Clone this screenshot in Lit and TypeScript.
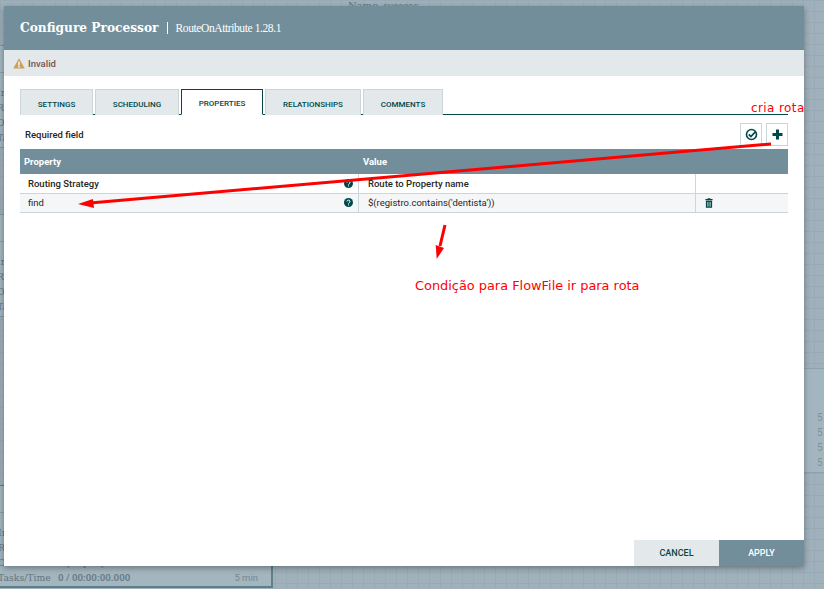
import { LitElement, html, css, svg } from 'lit'
import { customElement } from 'lit/decorators.js'

const TABS = ['SETTINGS', 'SCHEDULING', 'PROPERTIES', 'RELATIONSHIPS', 'COMMENTS']
const TAB_WIDTHS = [73, 84, 82, 96, 80]
const STATS = [
	['In', ''],
	['Read/Write', ''],
	['Out', '0 (0 bytes)'],
	['Tasks/Time', '0 / 00:00:00.000'],
]

@customElement('app-root')
class AppRoot extends LitElement {
	static styles = css`
		:host {
			display: block;
			position: relative;
			width: 824px;
			height: 589px;
			overflow: hidden;
			font-family: Roboto, sans-serif;
			background-color: #a0b1bc;
			background-image: linear-gradient(#98aab5 1px, transparent 1px),
				linear-gradient(90deg, #98aab5 1px, transparent 1px);
			background-size: 11px 11px;
		}

		/* processor cards behind the dialog */
		.card {
			position: absolute;
			left: -10px;
			width: 283px;
			height: 103px;
			box-sizing: border-box;
			background: #a3b5bf;
			border: 1px solid #5f7f89;
			border-width: 1px 2px 2px 1px;
		}
		.card.behind {
			width: 14px;
			overflow: hidden;
			border-width: 1px 0;
			border-color: #84979f;
		}
		.card-head {
			height: 27px;
			margin-bottom: 12px;
			border-bottom: 1px solid #8a9da7;
			box-sizing: border-box;
		}
		.stat {
			height: 15px;
			display: flex;
			align-items: center;
			padding-left: 7px;
		}
		.stat-label {
			font-family: 'DejaVu Serif', serif;
			font-size: 9.3px;
			color: #62757e;
			width: 60px;
			flex: none;
		}
		.stat-value {
			font-weight: 700;
			font-size: 9.7px;
			color: #6b7f89;
			flex: 1;
		}
		.stat-age {
			margin-right: 13px;
			color: #74888f;
			font-size: 9.5px;
		}
		.top-name {
			position: absolute;
			left: 348px;
			top: 0;
			display: flex;
			align-items: baseline;
			gap: 5px;
			font-family: 'DejaVu Serif', serif;
			font-size: 10px;
			color: #66777f;
		}
		.top-name b {
			font-family: Roboto, sans-serif;
			font-size: 9.5px;
			color: #74878f;
		}
		.side {
			position: absolute;
			left: 804px;
			top: 368px;
			width: 20px;
			height: 105px;
			box-sizing: border-box;
			padding: 41px 0 0 13px;
			background: #a3b6c0;
			border-top: 1px solid #8fa2ac;
			border-bottom: 1px solid #8fa2ac;
			font-size: 10px;
			color: #7e929b;
		}
		.side div {
			height: 15px;
			line-height: 15px;
		}

		.dialog {
			position: absolute;
			left: 4px;
			top: 6px;
			width: 800px;
			height: 560px;
			background: #fff;
			display: flex;
			flex-direction: column;
			box-shadow: 0 2px 6px rgba(0, 0, 0, 0.35);
		}
		.head {
			height: 44px;
			flex: none;
			background: #728e9b;
			color: #fff;
			display: flex;
			align-items: center;
			padding-left: 16px;
			box-sizing: border-box;
		}
		.title {
			font-family: 'DejaVu Serif', serif;
			font-weight: 700;
			font-size: 12.2px;
			padding-right: 8px;
			border-right: 1px solid #fff;
			line-height: 12px;
		}
		.type {
			font-family: 'Liberation Serif', serif;
			font-size: 11.5px;
			letter-spacing: -0.4px;
			padding-left: 8px;
			line-height: 14px;
		}
		.status {
			height: 26px;
			flex: none;
			background: #e3e8eb;
			display: flex;
			align-items: center;
			gap: 3px;
			padding-left: 9px;
			font-size: 9.5px;
			font-weight: 500;
			color: #775351;
		}
		.body {
			flex: 1;
			padding: 13px 16px 0;
		}
		.tabs {
			display: flex;
			height: 26px;
			gap: 2px;
			border-bottom: 1px solid #004849;
			box-sizing: border-box;
		}
		.tab {
			height: 26px;
			box-sizing: border-box;
			background: #e3e8eb;
			border: 1px solid #cad6dc;
			border-bottom: none;
			color: #004849;
			font-size: 8px;
			font-weight: 500;
			display: flex;
			align-items: center;
			justify-content: center;
			padding-top: 3px;
		}
		.tab.active {
			background: #fff;
			border: 1px solid #004849;
			border-bottom: 1px solid #fff;
		}
		.tools {
			display: flex;
			align-items: center;
			height: 34px;
			padding-left: 5px;
			font-size: 9.5px;
			font-weight: 500;
			color: #262626;
			gap: 4px;
		}
		.tools span {
			flex: 1;
			margin-top: 4px;
		}
		.tool {
			width: 22px;
			height: 23px;
			box-sizing: border-box;
			border: 1px solid #cad6dc;
			display: flex;
			align-items: center;
			justify-content: center;
			margin-top: 4px;
		}
		.table {
			display: grid;
			grid-template-columns: 339px 337px 92px;
			font-size: 9.5px;
			color: #262626;
		}
		.th {
			height: 25px;
			background: #728e9b;
			color: #fff;
			font-weight: 700;
			display: flex;
			align-items: center;
			padding-left: 4px;
		}
		.td {
			height: 19.5px;
			box-sizing: border-box;
			border-bottom: 1px solid #cad6dc;
			border-right: 1px solid #cad6dc;
			display: flex;
			align-items: center;
			justify-content: space-between;
			padding: 0 5px 0 8px;
		}
		.td.end {
			border-right: none;
			padding-left: 9px;
		}
		.td.name {
			font-weight: 500;
		}
		.td.alt {
			background: #f4f6f7;
		}
		.td.val {
			padding-left: 9px;
		}
		.foot {
			display: flex;
			justify-content: flex-end;
			flex: none;
		}
		.btn {
			width: 85px;
			height: 26px;
			display: flex;
			align-items: center;
			justify-content: center;
			font-size: 9px;
			font-weight: 500;
		}
		.cancel {
			background: #e3e8eb;
			color: #004849;
		}
		.apply {
			background: #728e9b;
			color: #fff;
		}

		/* hand drawn notes on top of the screenshot */
		.marks {
			position: absolute;
			left: 0;
			top: 0;
		}
		.note {
			position: absolute;
			font-family: 'DejaVu Sans', sans-serif;
			color: #f00;
			white-space: nowrap;
		}
		.note-route {
			left: 751px;
			top: 101px;
			font-size: 12px;
			letter-spacing: 0.4px;
		}
		.note-cond {
			left: 415px;
			top: 278px;
			font-size: 12.9px;
		}
	`

	private help() {
		return html`<svg width="9" height="9" viewBox="0 0 9 9">
			<circle cx="4.5" cy="4.5" r="4.5" fill="#004849" />
			<path d="M3 3.5a1.5 1.4 0 1 1 2.2 1.2c-.5.3-.7.5-.7 1" fill="none" stroke="#fff" stroke-width="1" />
			<rect x="4" y="6.4" width="1" height="1" fill="#fff" />
		</svg>`
	}

	private arrows() {
		return svg`
			<path d="M771 144 L90 203" stroke="#f00" stroke-width="3" fill="none" />
			<path d="M78 204 L93 199 L94 208 Z" fill="#f00" />
			<path d="M445 225 L440 246" stroke="#f00" stroke-width="3" fill="none" />
			<path d="M436.7 259 L435.7 245 L444 248 Z" fill="#f00" />
		`
	}

	private hiddenCard(top: number) {
		return html`<div class="card behind" style="top:${top}px">
			<div class="card-head"></div>
			${STATS.map(([label]) => html`<div class="stat"><span class="stat-label">${label}</span></div>`)}
		</div>`
	}

	render() {
		return html`
			<div class="top-name">Name <b>success</b></div>
			${this.hiddenCard(45)} ${this.hiddenCard(214)}
			<div class="card" style="top:485px">
				<div class="card-head"></div>
				${STATS.map(
					([label, value]) => html`<div class="stat">
						<span class="stat-label">${label}</span>
						${value
							? html`<span class="stat-value">${value}</span><span class="stat-age">5 min</span>`
							: ''}
					</div>`
				)}
			</div>
			<div class="side">
				<div>5</div>
				<div>5</div>
				<div>5</div>
				<div>5</div>
			</div>
			<div class="dialog">
				<div class="head">
					<span class="title">Configure Processor</span>
					<span class="type">RouteOnAttribute 1.28.1</span>
				</div>
				<div class="status">
					<svg width="12" height="11" viewBox="0 0 12 11">
						<path d="M6 0.3 L11.8 10.6 H0.2 Z" fill="#cf9f5d" />
						<rect x="5.3" y="3.6" width="1.4" height="3.8" fill="#fff" />
						<rect x="5.3" y="8" width="1.4" height="1.4" fill="#fff" />
					</svg>
					Invalid
				</div>
				<div class="body">
					<div class="tabs">
						${TABS.map(
							(t, i) =>
								html`<div class="tab ${i === 2 ? 'active' : ''}" style="width:${TAB_WIDTHS[i]}px">${t}</div>`
						)}
					</div>
					<div class="tools">
						<span>Required field</span>
						<div class="tool">
							<svg width="13" height="13" viewBox="0 0 13 13">
								<circle cx="6.5" cy="6.5" r="5" fill="none" stroke="#004849" stroke-width="1.6" />
								<path d="M3.8 6.4 L5.9 8.5 L10.6 3.6" fill="none" stroke="#004849" stroke-width="1.7" />
							</svg>
						</div>
						<div class="tool">
							<svg width="11" height="11" viewBox="0 0 11 11">
								<path d="M5.5 0.5 V10.5 M0.5 5.5 H10.5" stroke="#004849" stroke-width="3" fill="none" />
							</svg>
						</div>
					</div>
					<div class="table">
						<div class="th">Property</div>
						<div class="th">Value</div>
						<div class="th"></div>
						<div class="td name">Routing Strategy ${this.help()}</div>
						<div class="td name val">Route to Property name</div>
						<div class="td end"></div>
						<div class="td alt">find ${this.help()}</div>
						<div class="td alt val">$(registro.contains('dentista'))</div>
						<div class="td alt end">
							<svg width="8" height="10" viewBox="0 0 8 10">
								<path d="M2.6 1 V0.2 H5.4 V1 H7.6 V2.2 H0.4 V1 Z M0.9 2.8 H7.1 V9.8 H0.9 Z" fill="#004849" />
								<path d="M2.6 4 V8.6 M4 4 V8.6 M5.4 4 V8.6" stroke="#f4f6f7" stroke-width=".6" />
							</svg>
						</div>
					</div>
				</div>
				<div class="foot">
					<div class="btn cancel">CANCEL</div>
					<div class="btn apply">APPLY</div>
				</div>
			</div>
			<svg class="marks" width="824" height="589" viewBox="0 0 824 589">${this.arrows()}</svg>
			<div class="note note-route">cria rota</div>
			<div class="note note-cond">Condição para FlowFile ir para rota</div>
		`
	}
}
